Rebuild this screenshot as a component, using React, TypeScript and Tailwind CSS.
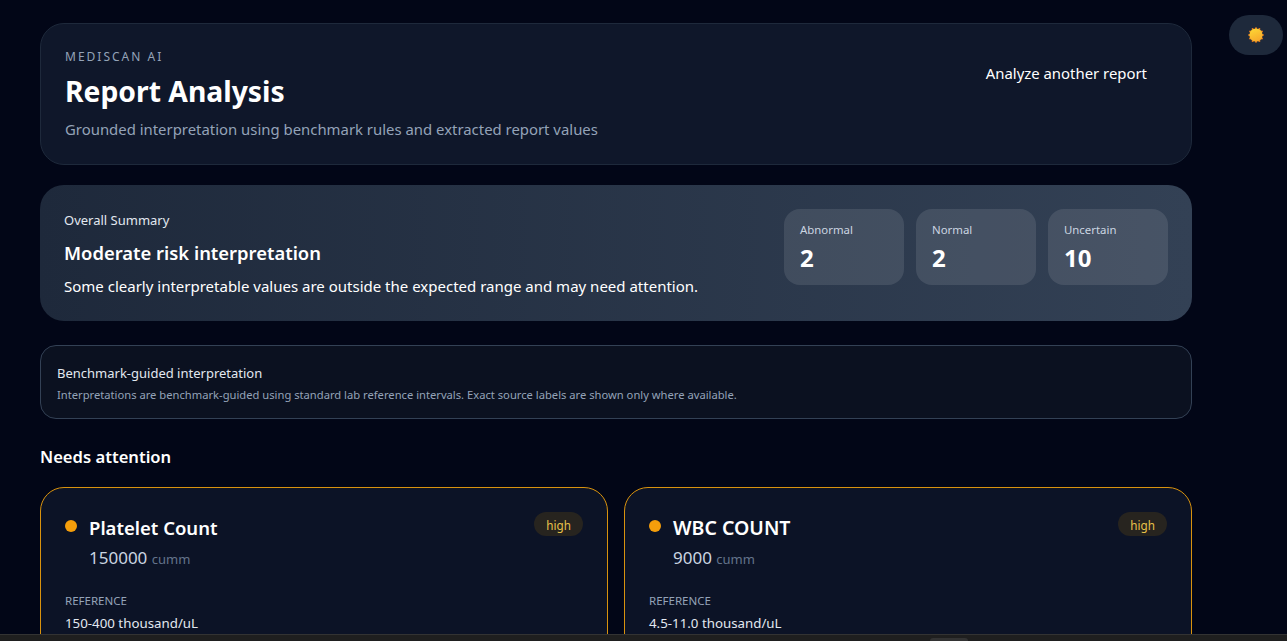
function Stat({ label, value }: { label: string; value: string }) {
  return (
    <div className="h-[76px] w-[120px] rounded-2xl bg-white/10 px-4 pt-[13px]">
      <div className="text-[11.4px] leading-[16px] text-[#cbd5e1]">{label}</div>
      <div className="mt-[6px] text-2xl font-bold leading-[28px] text-white">{value}</div>
    </div>
  );
}

function Attention({ name, nameClass, value, range }: { name: string; nameClass: string; value: string; range: string }) {
  return (
    <div className="h-[200px] rounded-3xl border border-[#d8920e] bg-[#0c1326] px-6 pt-6">
      <div className="flex items-start justify-between">
        <div className="flex items-start gap-3">
          <span className="mt-[8px] h-3 w-3 rounded-full bg-[#f59e0b]" />
          <div>
            <div className={`font-semibold leading-[32px] text-white ${nameClass}`}>{name}</div>
            <div className="text-[17px] leading-[28px] text-[#cbd5e1]">
              {value} <span className="text-[13px] text-[#64748b]">cumm</span>
            </div>
          </div>
        </div>
        <span className="rounded-full bg-[#27241f] px-3 pb-[1px] pt-[3px] text-[11.7px] leading-[20px] text-[#e8c24a]">high</span>
      </div>
      <div className="mt-[20px] text-[11.5px] leading-[16px] text-[#94a3b8]">REFERENCE</div>
      <div className="mt-[4px] text-[13.3px] leading-[20px] text-[#e2e8f0]">{range}</div>
    </div>
  );
}

function Sun() {
  const rays = Array.from({ length: 12 }, (_, i) => (i * Math.PI) / 6);
  return (
    <svg width="18" height="18" viewBox="0 0 18 18" aria-hidden="true">
      <defs>
        <linearGradient id="sun" x1="0.3" y1="0" x2="0.7" y2="1">
          <stop offset="0" stopColor="#fcd535" />
          <stop offset="1" stopColor="#f7a72a" />
        </linearGradient>
      </defs>
      {rays.map((a, i) => (
        <circle key={i} cx={9 + 6.8 * Math.cos(a)} cy={9 + 6.8 * Math.sin(a)} r="1" fill="#ee7d1c" />
      ))}
      <circle cx="9" cy="9" r="6.6" fill="url(#sun)" />
    </svg>
  );
}

export default function App() {
  return (
    <div className="relative h-[641px] overflow-hidden bg-[#020617] pl-10 pt-[23px] font-['Noto_Sans',sans-serif]">
      <div className="flex w-[1152px] flex-col">
        <header className="flex h-[142px] items-start justify-between rounded-3xl border border-[#1e293b] bg-[#0f172a] pl-6 pr-[44px] pt-[24px]">
          <div>
            <div className="text-xs leading-[18px] tracking-[2px] text-[#94a3b8]">MEDISCAN AI</div>
            <h1 className="mt-[7px] text-[28.3px] font-bold leading-[36px] text-white">Report Analysis</h1>
            <p className="mt-[8px] text-[14.9px] leading-[24px] text-[#94a3b8]">Grounded interpretation using benchmark rules and extracted report values</p>
          </div>
          <button className="mt-[13px] text-[14.9px] leading-[24px] text-white">Analyze another report</button>
        </header>

        <section className="mt-5 flex h-[136px] items-start justify-between rounded-3xl bg-gradient-to-r from-[#1e293b] to-[#334155] pl-6 pr-6 pt-[25px]">
          <div>
            <div className="text-[13px] leading-[20px] text-[#e2e8f0]">Overall Summary</div>
            <div className="mt-[9px] text-[18.4px] font-semibold leading-[28px] text-white">Moderate risk interpretation</div>
            <div className="mt-[7px] text-[15px] leading-[24px] text-white">Some clearly interpretable values are outside the expected range and may need attention.</div>
          </div>
          <div className="mt-[-1px] flex gap-3">
            <Stat label="Abnormal" value="2" />
            <Stat label="Normal" value="2" />
            <Stat label="Uncertain" value="10" />
          </div>
        </section>

        <section className="mt-6 h-[74px] rounded-2xl border border-[#334155] bg-[#0b1120] px-4 pt-[17px]">
          <div className="text-[13px] leading-[20px] text-[#e2e8f0]">Benchmark-guided interpretation</div>
          <div className="mt-[4px] text-[11.2px] leading-[16px] text-[#94a3b8]">Interpretations are benchmark-guided using standard lab reference intervals. Exact source labels are shown only where available.</div>
        </section>

        <h2 className="mt-[26px] text-[16.6px] font-semibold leading-[24px] text-white">Needs attention</h2>

        <div className="mt-[18px] grid grid-cols-2 gap-4">
          <Attention name="Platelet Count" nameClass="text-[18.5px]" value="150000" range="150-400 thousand/uL" />
          <Attention name="WBC COUNT" nameClass="text-[19.5px]" value="9000" range="4.5-11.0 thousand/uL" />
        </div>
      </div>

      <button className="absolute right-1 top-[15px] flex h-10 w-[54px] items-center justify-center rounded-full bg-[#1e293b]">
        <Sun />
      </button>

      <div className="absolute inset-x-0 bottom-0 h-[7px] border-t border-[#333333] bg-[#1f1f1f]">
        <div className="ml-[930px] mt-[3px] h-[3px] w-[38px] rounded-t-sm bg-[#333333]" />
      </div>
    </div>
  );
}
